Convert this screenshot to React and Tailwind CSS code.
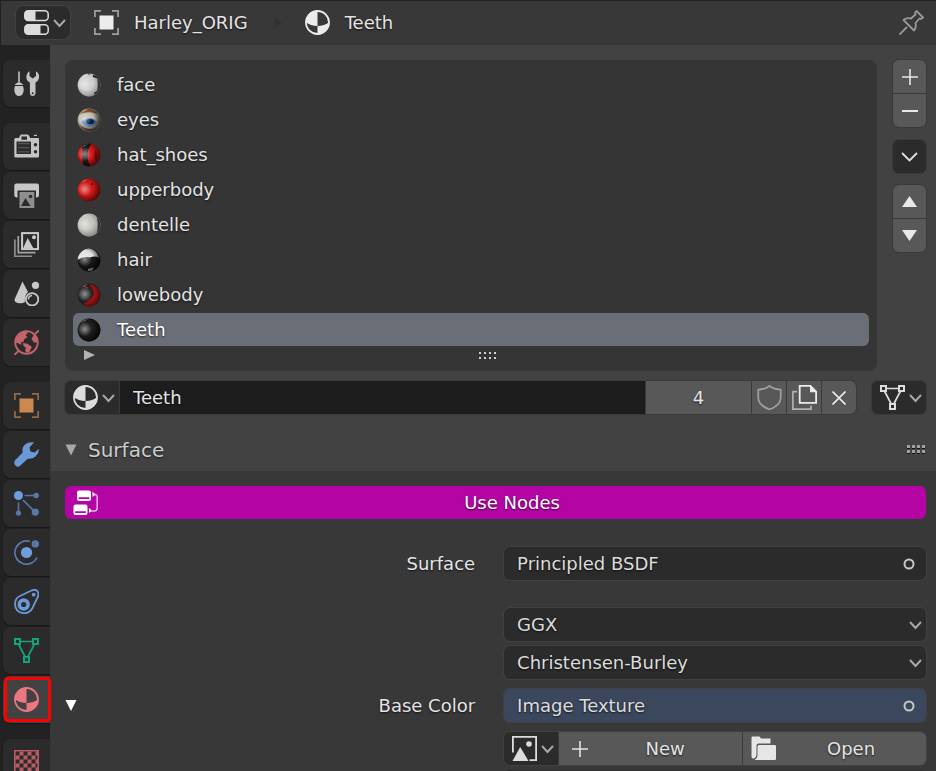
import { useState } from 'react';

function ChevronIcon({ className = 'text-[#a8a8a8]' }) {
  return (
    <svg width="13" height="10" viewBox="0 0 13 10" fill="none" stroke="currentColor" strokeWidth="2" className={className}>
      <path d="M1 2 L6.5 8 L12 2" />
    </svg>
  );
}

function Icon({ children, className = '' }) {
  return (
    <svg width="25" height="25" viewBox="0.5 0.5 25 25" fill="none" className={`shrink-0 ${className}`} aria-hidden="true">
      {children}
    </svg>
  );
}

function MaterialIcon({ className }) {
  return (
    <Icon className={className}>
      <circle cx="13" cy="13" r="11.5" stroke="currentColor" strokeWidth="1.8" />
      <path d="M13 1 V16.5 Q6 16.5 1.2 12.5 A12 12 0 0 1 13 1 Z" fill="currentColor" />
      <path d="M13 25 V16.5 Q20 16.5 24.8 12.5 A12 12 0 0 1 13 25 Z" fill="currentColor" />
    </Icon>
  );
}

function ObjectIcon({ className, frame }) {
  return (
    <Icon className={className}>
      <path d="M1.4 7.5 V1.4 H7.5 M18.5 1.4 H24.6 V7.5 M24.6 18.5 V24.6 H18.5 M7.5 24.6 H1.4 V18.5" stroke={frame} strokeWidth="1.7" />
      <rect x="6" y="6" width="14" height="14" fill="currentColor" />
    </Icon>
  );
}

function MeshIcon({ className }) {
  return (
    <Icon className={className}>
      <g stroke="currentColor" strokeWidth="2">
        <rect x="1.5" y="1.5" width="5" height="5" />
        <rect x="19.5" y="1.5" width="5" height="5" />
        <rect x="10.5" y="19.5" width="5" height="5" />
        <path d="M7 4 H19 M5.2 7 L11.5 19 M20.8 7 L14.5 19" strokeWidth="1.7" />
      </g>
    </Icon>
  );
}

function PropertiesIcon() {
  return (
    <Icon className="text-[#dcdcdc]">
      <rect x="1.3" y="1.3" width="23.4" height="9.6" rx="3.5" stroke="currentColor" strokeWidth="1.5" />
      <path d="M12 1 H4.5 Q1.2 1 1.2 4 V8 Q1.2 11 4.5 11 H12 Z" fill="currentColor" />
      <rect x="1.3" y="15.2" width="23.4" height="9.6" rx="3.5" stroke="currentColor" strokeWidth="1.5" />
      <path d="M17 15 H4.5 Q1.2 15 1.2 18 V22 Q1.2 25 4.5 25 H17 Z" fill="currentColor" />
    </Icon>
  );
}

function ToolIcon() {
  return (
    <Icon className="text-[#c4c4c4]">
      <path d="M5.5 1 V12" stroke="currentColor" strokeWidth="1.6" />
      <path d="M4 12 H7 L10 14.5 H1 Z" fill="currentColor" />
      <path d="M1.5 15.5 H9.5 Q10.5 18 10 21 Q9 25.5 5.5 25.5 Q2 25.5 1 21 Q0.5 18 1.5 15.5 Z" fill="currentColor" />
      <path d="M16 0.8 V5.5 L19.2 8 L22.5 5.5 V0.8 Q26 3 25.6 7 Q25 10.5 22 12 V23 Q21.5 25.5 19.2 25.5 Q16.8 25.5 16.4 23 V12 Q13.2 10.5 12.9 7 Q12.6 3 16 0.8 Z" fill="currentColor" />
      <circle cx="19.2" cy="22.8" r="1" fill="#2b2b2b" />
    </Icon>
  );
}

function RenderIcon() {
  return (
    <Icon className="text-[#c4c4c4]">
      <path fillRule="evenodd" d="M2 4.5 H5.5 Q6.5 1 8 1 H14 Q15.5 1 16.5 4.5 H24.5 Q25.5 4.5 25.5 5.5 V22.5 Q25.5 24 24 24 H2 Q0.8 24 0.8 22.5 V6 Q0.8 4.5 2 4.5 Z M8 3 V6.2 H13.5 V3 Z" fill="currentColor" />
      <path d="M20 2.6 L21 1.2 H23.5 V2.6 Z" fill="currentColor" />
      <rect x="3" y="8" width="14.5" height="12.5" fill="#2b2b2b" />
      <path d="M4.5 10 H16 M4.5 14.2 H16 M4.5 18.4 H16" stroke="#555555" strokeWidth="1.3" />
      <circle cx="22" cy="11.2" r="1.8" fill="#2b2b2b" />
      <circle cx="22" cy="18.2" r="1.8" fill="#2b2b2b" />
    </Icon>
  );
}

function OutputIcon() {
  return (
    <Icon className="text-[#c8c8c8]">
      <path d="M3 1 H23.5 Q25.5 1 25.5 3.2 V12.5 Q25.5 14.5 23.5 15 H22.5 V8 H4 V15 H3 Q0.8 14.5 0.8 12.5 V3.2 Q0.8 1 3 1 Z" fill="currentColor" />
      <rect x="6" y="9.5" width="14.8" height="16" fill="#8e8e8e" />
      <path d="M7.5 23.5 L12 15.5 L17 23.5 Z" fill="#2b2b2b" />
      <circle cx="17" cy="14" r="1.8" fill="#2b2b2b" />
    </Icon>
  );
}

function ViewLayerIcon() {
  return (
    <Icon>
      <path d="M1.4 8 V24.8 H18.5" stroke="#8f8f8f" strokeWidth="1.7" />
      <path d="M4.8 4.5 V21.2 H22" stroke="#a3a3a3" strokeWidth="1.7" />
      <rect x="8.6" y="1.6" width="16" height="16" stroke="#cccccc" strokeWidth="2" />
      <path d="M9.5 17 L14.2 6.5 L20 17 Z" fill="#cccccc" />
      <circle cx="20.5" cy="5.8" r="2" fill="#cccccc" />
    </Icon>
  );
}

function SceneIcon() {
  return (
    <Icon className="text-[#c8c8c8]">
      <path d="M9 1 L14.5 11.5 Q10.5 15 11.5 21.5 Q8.5 23.5 4.5 22.5 Q0.8 21.5 1 19 Z" fill="currentColor" />
      <circle cx="22" cy="4.8" r="3.6" fill="currentColor" />
      <circle cx="18.6" cy="18.8" r="6.2" stroke="currentColor" strokeWidth="1.8" />
      <path d="M14.8 19 Q15 15.2 18.6 15" stroke="currentColor" strokeWidth="1.5" />
    </Icon>
  );
}

function WorldIcon() {
  return (
    <Icon className="text-[#c4636c]">
      <circle cx="13" cy="13" r="11.3" stroke="currentColor" strokeWidth="1.8" />
      <path d="M0.8 25.5 L5 21.5 M21.5 4.5 L25.5 0.8" stroke="currentColor" strokeWidth="1.8" />
      <path d="M2.5 10 Q5 3 12 1.8 L14.5 3.5 L12 5.5 L14 7.5 L11 9.5 L9.5 13 L7.5 12 L8 15.5 L5.5 14 L2 13 Z" fill="currentColor" />
      <path d="M9.5 13.6 L14 14.2 L18.5 17.5 L17 20 L16.5 22 L13 23.5 L11.5 21 L12.5 18.5 L10 16.5 Z" fill="currentColor" />
      <path d="M20.5 5 L24 9.5 L24.5 13 L20.5 13 L18 9.5 Z" fill="currentColor" />
    </Icon>
  );
}

function ModifierIcon() {
  return (
    <Icon className="text-[#6b98d6]">
      <path d="M20.5 1 Q14.5 -0.5 10.5 4 Q8.2 7 9.2 11 L1.6 18.8 Q0 21 1.3 23.3 Q3 26 5.8 25 L14.2 17.2 Q18.8 18 22.2 14.8 Q25.8 11.3 25.4 7.5 L21 11 L17 10 L16 6 Z" fill="currentColor" />
    </Icon>
  );
}

function ParticlesIcon() {
  return (
    <Icon className="text-[#5878ab]">
      <path d="M11 5 H21 M5 12 V22 M9.5 9.5 L21 21" stroke="currentColor" strokeWidth="1.6" />
      <circle cx="5" cy="5" r="4.5" fill="#6f9edb" />
      <circle cx="22.7" cy="5" r="2.7" fill="currentColor" />
      <circle cx="5" cy="22.6" r="2.7" fill="currentColor" />
      <circle cx="21.8" cy="21.6" r="3.6" fill="currentColor" />
    </Icon>
  );
}

function PhysicsIcon() {
  return (
    <Icon className="text-[#5878ab]">
      <path d="M16.5 2 A11.6 11.6 0 1 0 23.5 18" stroke="currentColor" strokeWidth="1.7" />
      <circle cx="13" cy="13" r="5.6" fill="#6f9edb" />
      <circle cx="21.8" cy="4.4" r="3.7" fill="currentColor" />
    </Icon>
  );
}

function ConstraintIcon() {
  return (
    <Icon className="text-[#6b98d6]">
      <path d="M18.5 1.8 Q22 0.4 24 2.8 Q25.5 5 24.5 8 L19 19.5 Q16 25 10 24.7 Q1.8 23.7 1.5 15.5 Q1.7 9.5 6.5 7.5 Z" stroke="currentColor" strokeWidth="1.8" />
      <circle cx="10.2" cy="16" r="4.4" stroke="currentColor" strokeWidth="3.6" />
      <circle cx="20.2" cy="6.2" r="1.9" fill="currentColor" />
    </Icon>
  );
}

function TextureIcon() {
  return (
    <Icon className="text-[#b75c64]">
      <path d="M1.3 1.3 H24.7 V24.7 H1.3 Z" stroke="currentColor" strokeWidth="1.6" />
      <path d="M6 2 h4 v4 h-4z M14 2 h4 v4 h-4z M22 2 h3 v4 h-3z M2 6 h4 v4 h-4z M10 6 h4 v4 h-4z M18 6 h4 v4 h-4z M6 10 h4 v4 h-4z M14 10 h4 v4 h-4z M22 10 h3 v4 h-3z M2 14 h4 v4 h-4z M10 14 h4 v4 h-4z M18 14 h4 v4 h-4z M6 18 h4 v4 h-4z M14 18 h4 v4 h-4z M22 18 h3 v4 h-3z" fill="currentColor" />
    </Icon>
  );
}

function NodesIcon() {
  return (
    <Icon className="text-white">
      <path fillRule="evenodd" d="M6.5 1 H16.5 Q18.5 1 18.5 3 V9.5 Q18.5 11.5 16.5 11.5 H6.5 Q4.5 11.5 4.5 9.5 V3 Q4.5 1 6.5 1 Z M6.2 7.8 V9.6 H16.8 V7.8 Z" fill="currentColor" />
      <path fillRule="evenodd" d="M3 15 H13 Q15 15 15 17 V23.5 Q15 25.5 13 25.5 H3 Q1 25.5 1 23.5 V17 Q1 15 3 15 Z M2.7 21.8 V23.6 H13.3 V21.8 Z" fill="currentColor" />
      <path d="M20 2 L23 5 L20 7.5 Z M16.5 18.5 L19.5 21 L16.5 23.5 Z" fill="currentColor" />
      <path d="M22 5 Q24.8 5 24.7 8 V18 Q24.7 21.5 22 21.5 H18.5" stroke="#ecb3e7" strokeWidth="1.5" />
    </Icon>
  );
}

const tabGroups = [
  [{ name: 'Tool', icon: <ToolIcon /> }],
  [
    { name: 'Render', icon: <RenderIcon /> },
    { name: 'Output', icon: <OutputIcon /> },
    { name: 'View Layer', icon: <ViewLayerIcon /> },
    { name: 'Scene', icon: <SceneIcon /> },
    { name: 'World', icon: <WorldIcon /> },
  ],
  [
    { name: 'Object', icon: <ObjectIcon className="text-[#cb8950]" frame="#966a42" /> },
    { name: 'Modifiers', icon: <ModifierIcon /> },
    { name: 'Particles', icon: <ParticlesIcon /> },
    { name: 'Physics', icon: <PhysicsIcon /> },
    { name: 'Constraints', icon: <ConstraintIcon /> },
    { name: 'Data', icon: <MeshIcon className="text-[#12a57d]" /> },
    { name: 'Material', icon: <MaterialIcon className="text-[#ec7780]" /> },
  ],
  [{ name: 'Texture', icon: <TextureIcon /> }],
];

// Sphere thumbnails: flat colour, texture details, then shading over both
const materials = [
  {
    name: 'face',
    color: '#cfcfcf',
    shade: 0.35,
    detail: (
      <>
        <path d="M20 4 Q21.5 12 20 18 L17 19.5 L18 24 H24 V2 Z" fill="#353535" />
        <path d="M16 2 L22 3.5 L21 5.5 L16 4 Z M10 0 L12 2 L13 0 Z" fill="#1c1c1c" />
      </>
    ),
  },
  {
    name: 'eyes',
    color: '#bfbbae',
    shade: 0.85,
    detail: (
      <>
        <path d="M3 6 Q12 -4 21 6 Q12 2.5 3 6 Z" fill="#94502f" />
        <path d="M2 17 Q11 27 20 20 Q11 23 2 17 Z" fill="#8c5a40" />
        <path d="M4.5 14 Q8 10 13 10 Q18 10.5 20 14.5 Q16 19 11.5 18.5 Q7 18 4.5 14 Z" fill="#4a80c4" />
        <ellipse cx="13" cy="13.6" rx="4" ry="2.6" fill="#121c2c" />
      </>
    ),
  },
  {
    name: 'hat_shoes',
    color: '#d01717',
    shade: 0.75,
    detail: (
      <>
        <path d="M5 0 H15 Q10.5 6 10.5 12 Q10.5 19 14 24 H7 Q4.5 17 5.5 9 Q6 5 4 2 Z" fill="#1a1a1a" />
        <path d="M18.5 7 Q21 12 19 18 Q16.5 13 18.5 7 Z" fill="#6c0808" />
      </>
    ),
  },
  { name: 'upperbody', color: '#cf1717', shade: 0.7, detail: <circle cx="15" cy="6" r="1" fill="#500808" /> },
  { name: 'dentelle', color: '#c6c6be', shade: 0.35, detail: <path d="M18 0 Q23 9 19 24 L24 22 V0 Z" fill="#353535" /> },
  {
    name: 'hair',
    color: '#191919',
    shade: 0.9,
    detail: (
      <>
        <path d="M0 11 Q2 2 12 0 Q20 2 22.5 10 Q18 7.5 13 9.5 Q7 8 0 12 Z" fill="#e0e0e0" />
        <path d="M11 21 L17 19.5 L15 23 H11 Z" fill="#dddddd" />
      </>
    ),
  },
  {
    name: 'lowebody',
    color: '#242424',
    shade: 0.6,
    detail: (
      <>
        <path d="M12 1 Q20 1 23.5 11 Q22 23 11 24 L6 21 Q13 18 17 12 Q17 6 12 1 Z" fill="#b81515" />
        <path d="M7 3 L11 4 L9.5 6 Z" fill="#b51a1a" />
      </>
    ),
  },
  { name: 'Teeth', color: '#1d1d1d', shade: 0.9, detail: null },
];

function MaterialBall({ name, color, shade, detail }) {
  return (
    <svg width="24" height="24" viewBox="0 0 24 24" className="shrink-0" aria-hidden="true">
      <defs>
        <radialGradient id={`edge-${name}`} cx="0.38" cy="0.42" r="0.64">
          <stop offset="0.45" stopColor="#000000" stopOpacity="0" />
          <stop offset="1" stopColor="#000000" stopOpacity={shade} />
        </radialGradient>
        <radialGradient id={`glow-${name}`} cx="0.32" cy="0.46" r="0.3">
          <stop offset="0" stopColor="#ffffff" stopOpacity="0.5" />
          <stop offset="1" stopColor="#ffffff" stopOpacity="0" />
        </radialGradient>
        <clipPath id={`clip-${name}`}>
          <circle cx="12" cy="12" r="11.4" />
        </clipPath>
      </defs>
      <g clipPath={`url(#clip-${name})`}>
        <rect width="24" height="24" fill={color} />
        {shade < 0.5 && <rect width="24" height="24" fill={`url(#edge-${name})`} />}
        {detail}
        {shade >= 0.5 && <rect width="24" height="24" fill={`url(#edge-${name})`} />}
        <rect width="24" height="24" fill={`url(#glow-${name})`} />
        <path d="M4 5 Q7 1.5 11 1 Q7 3.5 4 5 Z" fill="#ffffff" opacity="0.45" />
      </g>
    </svg>
  );
}

const sideButton = 'flex h-[33px] w-full items-center justify-center bg-[#585858] text-[#e8e8e8] hover:bg-[#656565]';
const field = 'flex h-[33px] w-full items-center rounded-md pl-[13px] shadow-[0_0_0_1px_#414141] text-[#dcdcdc] [text-shadow:0_1px_2px_#000000b0]';

function Socket() {
  return (
    <svg width="14" height="14" viewBox="0 0 14 14" fill="none" className="mr-[10px] ml-auto" aria-hidden="true">
      <circle cx="7" cy="7" r="4.5" stroke="#c8c8c8" strokeWidth="2" />
    </svg>
  );
}

function SelectField({ label, options }) {
  return (
    <div className="relative">
      <select aria-label={label} className={`${field} appearance-none bg-[#2b2b2b]`}>
        {options.map((option) => (
          <option key={option}>{option}</option>
        ))}
      </select>
      <span className="pointer-events-none absolute inset-y-0 right-1 flex items-center">
        <ChevronIcon />
      </span>
    </div>
  );
}

function DotGrip({ small }) {
  const size = small ? 2 : 3;
  return (
    <svg width="20" height="10" viewBox="0 0 20 10" aria-hidden="true">
      {[0, 1].map((row) =>
        [0, 1, 2, 3].map((col) => (
          <g key={`${row}-${col}`}>
            {!small && <rect x={col * 5 + 1} y={row * 5 + 3} width="3" height="1" fill="#151515" />}
            <rect x={col * 5 + 1} y={row * 5 + (small ? 1 : 0)} width={size} height={size} fill={small ? '#cfcfcf' : '#a0a0a0'} />
          </g>
        ))
      )}
    </svg>
  );
}

function App() {
  const [selected, setSelected] = useState('Teeth');
  const [activeTab, setActiveTab] = useState('Material');

  return (
    <div className="flex h-screen flex-col overflow-hidden border-t border-l border-[#222222] bg-[#383838] font-['DejaVu_Sans','Noto_Sans',sans-serif] text-[18px] leading-6 text-[#e4e4e4] [text-shadow:0_1px_2px_#000000b0]">
      {/* Header */}
      <header className="flex h-11 shrink-0 items-center bg-[#383838] pr-[12px] pb-px pl-[15px]">
        <button aria-label="Editor type" className="flex h-[33px] w-[54px] items-center gap-1 rounded-lg bg-[#2b2b2b] pl-2 shadow-[0_0_0_1px_#424242]">
          <PropertiesIcon />
          <ChevronIcon />
        </button>
        <ObjectIcon className="ml-6 text-[#ececec]" frame="#a0a0a0" />
        <span className="ml-[15px]">Harley_ORIG</span>
        <svg width="8" height="12" viewBox="0 0 8 12" className="ml-[26px]" aria-hidden="true">
          <path d="M0 0 L8 6 L0 12 Z" fill="#323232" />
        </svg>
        <MaterialIcon className="ml-[23px] text-[#ececec]" />
        <span className="ml-[15px]">Teeth</span>
        <button aria-label="Pin" className="ml-auto text-[#999999]">
          <Icon>
            <path d="M1 25 L8.5 17.5" stroke="currentColor" strokeWidth="1.8" />
            <path d="M18 1.5 L24.5 8 L22.5 9.5 L21 9 L17 13.5 Q18 18 15.5 21 L5 10.5 Q8 8 12.5 9 L17 5 L16.5 3.5 Z" stroke="currentColor" strokeWidth="1.8" strokeLinejoin="round" />
          </Icon>
        </button>
      </header>

      <div className="flex min-h-0 flex-1">
        {/* Tabs */}
        <nav className="flex w-[49px] shrink-0 flex-col gap-4 bg-[#222222] pt-[15px] pl-[2px]">
          {tabGroups.map((group) => (
            <div key={group[0].name} className="flex flex-col gap-[2px]">
              {group.map((tab) => (
                <button
                  key={tab.name}
                  aria-label={tab.name}
                  onClick={() => setActiveTab(tab.name)}
                  className={`relative flex h-[47px] items-center justify-center rounded-l-lg shadow-[0_1px_1px_#181818] ${
                    activeTab === tab.name ? 'bg-[#424242]' : 'bg-[#2b2b2b]'
                  }`}
                >
                  {tab.icon}
                  {activeTab === tab.name && (
                    <span className="absolute inset-y-px -right-px left-px z-10 rounded-sm border-[3px] border-[#ff0000]" />
                  )}
                </button>
              ))}
            </div>
          ))}
        </nav>

        <main className="min-w-0 flex-1">
          <section className="bg-[#424242] pt-[15px] pr-[10px] pl-[15px]">
            {/* Material slots */}
            <div className="flex gap-4">
              <div className="flex-1 rounded-lg border-b border-[#3a3a3a] bg-[#353535] px-2 pt-2">
                <ul className="flex flex-col gap-[2px]">
                  {materials.map((material) => (
                    <li key={material.name}>
                      <button
                        onClick={() => setSelected(material.name)}
                        className={`flex h-[33px] w-full items-center gap-4 rounded-md pl-1 text-left [text-shadow:0_1px_2px_#000000b0] ${
                          selected === material.name ? 'bg-[#6a6e77] text-white' : ''
                        }`}
                      >
                        <MaterialBall {...material} />
                        {material.name}
                      </button>
                    </li>
                  ))}
                </ul>
                <div className="flex h-6 items-start pt-1">
                  <button aria-label="Filter" className="w-[26px] pl-[11px]">
                    <svg width="11" height="10" viewBox="0 0 11 10">
                      <path d="M0 0 L11 5 L0 10 Z" fill="#b4b4b4" />
                    </svg>
                  </button>
                  <span className="flex flex-1 justify-center pt-px pl-2">
                    <DotGrip small />
                  </span>
                </div>
              </div>
              <div className="flex w-[33px] flex-col">
                <div className="flex flex-col gap-px overflow-hidden rounded-md bg-[#3a3a3a] shadow-[0_0_0_1px_#3a3a3a]">
                  <button aria-label="Add slot" className={sideButton}>
                    <svg width="16" height="16" viewBox="0 0 16 16" stroke="currentColor" strokeWidth="1.6">
                      <path d="M8 0 V16 M0 8 H16" />
                    </svg>
                  </button>
                  <button aria-label="Remove slot" className={sideButton}>
                    <svg width="16" height="16" viewBox="0 0 16 16" stroke="currentColor" strokeWidth="1.8">
                      <path d="M0 8 H16" />
                    </svg>
                  </button>
                </div>
                <button aria-label="Slot menu" className="mt-[13px] flex h-[33px] items-center justify-center rounded-md bg-[#2b2b2b] shadow-[0_0_0_1px_#3a3a3a]">
                  <svg width="17" height="10" viewBox="0 0 17 10" fill="none" stroke="#e0e0e0" strokeWidth="1.8">
                    <path d="M1 1 L8.5 8.5 L16 1" />
                  </svg>
                </button>
                <div className="mt-3 flex flex-col gap-px overflow-hidden rounded-md bg-[#3a3a3a] shadow-[0_0_0_1px_#3a3a3a]">
                  <button aria-label="Move up" className={sideButton}>
                    <svg width="15" height="11" viewBox="0 0 15 11">
                      <path d="M7.5 0 L15 11 H0 Z" fill="currentColor" />
                    </svg>
                  </button>
                  <button aria-label="Move down" className={sideButton}>
                    <svg width="15" height="11" viewBox="0 0 15 11">
                      <path d="M7.5 11 L15 0 H0 Z" fill="currentColor" />
                    </svg>
                  </button>
                </div>
              </div>
            </div>

            {/* Material datablock */}
            <div className="mt-[10px] flex h-[33px] gap-4">
              <div className="flex min-w-0 flex-1 gap-px overflow-hidden rounded-md bg-[#3a3a3a] shadow-[0_0_0_1px_#3a3a3a]">
                <button aria-label="Browse material" className="flex w-[54px] shrink-0 items-center gap-1 bg-[#2b2b2b] pl-2 text-[#dcdcdc]">
                  <MaterialIcon />
                  <ChevronIcon />
                </button>
                <input
                  aria-label="Material name"
                  defaultValue="Teeth"
                  className="min-w-0 flex-1 bg-[#1d1d1d] pl-[13px] outline-none [text-shadow:0_1px_2px_#000000b0]"
                />
                <button className="w-[105px] bg-[#585858] [text-shadow:0_1px_2px_#000000b0]">4</button>
                <button aria-label="Fake user" className="flex w-[34px] items-center justify-center bg-[#585858] text-[#a0a0a0]">
                  <Icon>
                    <path d="M13 1.5 Q17.5 5 24.2 5 V14 Q23.5 21 13 25 Q2.5 21 1.8 14 V5 Q8.5 5 13 1.5 Z" stroke="currentColor" strokeWidth="1.7" />
                  </Icon>
                </button>
                <button aria-label="New material" className="flex w-[34px] items-center justify-center bg-[#585858] text-[#ececec]">
                  <Icon>
                    <path d="M5.5 7.2 H1.4 V24.7 H19.5 V21" stroke="#b0b0b0" strokeWidth="1.7" />
                    <path d="M8.2 1.4 H19 L24.6 7.2 V18.3 H8.2 Z" stroke="currentColor" strokeWidth="1.8" />
                    <path d="M18.5 1 V7.8 H25.2 Z" fill="currentColor" />
                  </Icon>
                </button>
                <button aria-label="Unlink" className="flex w-[34px] items-center justify-center bg-[#585858] text-[#e8e8e8]">
                  <svg width="14" height="14" viewBox="0 0 14 14" stroke="currentColor" strokeWidth="1.7">
                    <path d="M0.5 0.5 L13.5 13.5 M13.5 0.5 L0.5 13.5" />
                  </svg>
                </button>
              </div>
              <button aria-label="Link to" className="flex w-[54px] shrink-0 items-center gap-1 rounded-md bg-[#2b2b2b] pl-2 text-[#dcdcdc] shadow-[0_0_0_1px_#3a3a3a]">
                <MeshIcon />
                <ChevronIcon />
              </button>
            </div>

            <div className="mt-[15px] flex h-[42px] items-center">
              <svg width="12" height="12" viewBox="0 0 12 12" aria-hidden="true">
                <path d="M0.5 0.5 H11.5 L6 11.5 Z" fill="#a8a8a8" />
              </svg>
              <h2 className="ml-[11px] text-[20px] text-[#cccccc]">Surface</h2>
              <span className="ml-auto">
                <DotGrip />
              </span>
            </div>
          </section>

          {/* Surface panel */}
          <section className="pt-[15px] pr-[10px] pl-[15px]">
            <button className="flex h-[33px] w-full items-center rounded-md bg-[#b405a4] pl-2 text-white [text-shadow:0_1px_2px_#000000b0]">
              <NodesIcon />
              <span className="flex-1">Use Nodes</span>
            </button>

            <div className="mt-7 grid grid-cols-[51fr_49fr] items-center">
              <label htmlFor="surface" className="pr-[29px] text-right">Surface</label>
              <button id="surface" className={`${field} bg-[#2b2b2b]`}>
                Principled BSDF
                <Socket />
              </button>
            </div>

            <div className="mt-7 grid grid-cols-[51fr_49fr]">
              <div className="col-start-2 flex flex-col gap-[5px]">
                <SelectField label="Distribution" options={['GGX', 'Multiscatter GGX']} />
                <SelectField label="Subsurface method" options={['Christensen-Burley', 'Random Walk']} />
              </div>
            </div>

            <div className="mt-[10px] grid grid-cols-[51fr_49fr] items-center">
              <div className="flex items-center justify-between pr-[29px]">
                <button aria-label="Collapse">
                  <svg width="12" height="11" viewBox="0 0 12 11">
                    <path d="M0.5 0 H11.5 L6 11 Z" fill="#ffffff" />
                  </svg>
                </button>
                <label htmlFor="base-color">Base Color</label>
              </div>
              <button id="base-color" className={`${field} bg-[#3a475c]`}>
                Image Texture
                <Socket />
              </button>
            </div>

            <div className="mt-[10px] grid grid-cols-[51fr_49fr]">
              <div className="col-start-2 flex h-[33px] gap-px overflow-hidden rounded-md bg-[#3a3a3a] shadow-[0_0_0_1px_#414141]">
                <button aria-label="Browse image" className="flex w-[54px] shrink-0 items-center gap-1 bg-[#2b2b2b] pl-2 text-[#dcdcdc]">
                  <Icon>
                    <path d="M1.4 17 V1.4 H24.6 V24.6 H18" stroke="currentColor" strokeWidth="1.8" />
                    <path d="M1 25.5 L8.7 11.5 L17 25.5 Z" fill="currentColor" />
                    <circle cx="17.5" cy="8.5" r="2.8" fill="currentColor" />
                  </Icon>
                  <ChevronIcon />
                </button>
                <div className="grid flex-1 grid-cols-2 gap-px">
                  <button className="flex items-center bg-[#585858] pl-[13px] [text-shadow:0_1px_2px_#000000b0]">
                    <svg width="16" height="16" viewBox="0 0 16 16" stroke="currentColor" strokeWidth="1.6" aria-hidden="true">
                      <path d="M8 0 V16 M0 8 H16" />
                    </svg>
                    <span className="flex-1">New</span>
                  </button>
                  <button className="flex items-center bg-[#585858] pl-2 [text-shadow:0_1px_2px_#000000b0]">
                    <Icon className="text-[#e6e6e6]">
                      <path d="M1 2 Q1 1 2 1 H9 L10.5 3 H20 V8 H8 Q6 8 6 10 V19 Q6 22 3.5 23 Q1 23.5 1 21 Z" fill="currentColor" />
                      <path d="M8.5 9.5 H24.5 Q25.5 9.5 25.5 11 V23 Q25.5 24.5 24.5 24.5 H4 Q7 23 7 19 V11 Q7 9.5 8.5 9.5 Z" fill="currentColor" />
                    </Icon>
                    <span className="flex-1">Open</span>
                  </button>
                </div>
              </div>
            </div>

            <div className="mt-[5px] grid grid-cols-[51fr_49fr]">
              <div className="col-start-2 h-[33px] rounded-md bg-[#2b2b2b]" />
            </div>
          </section>
        </main>
      </div>
    </div>
  );
}

export default App;
